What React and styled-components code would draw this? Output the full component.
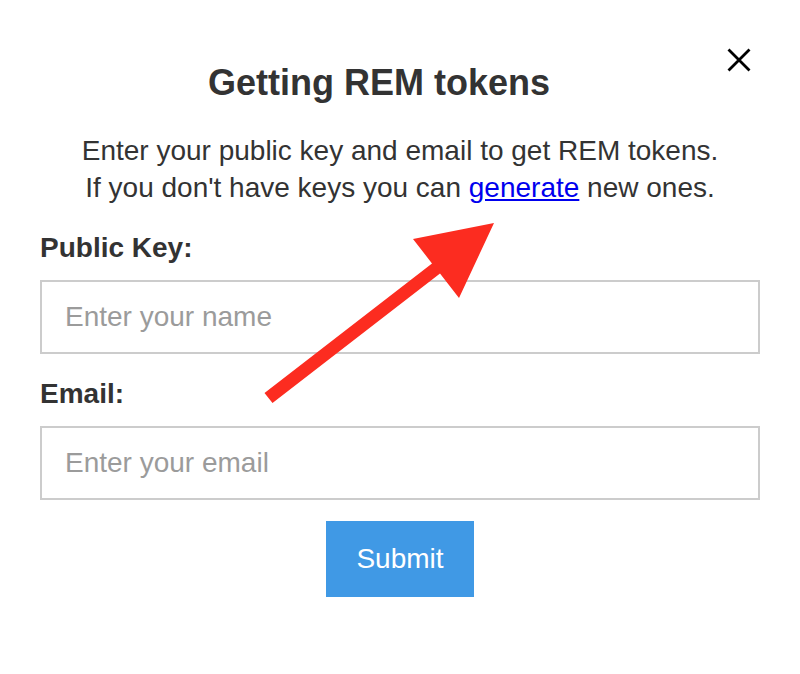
import React from "react";
import styled, { createGlobalStyle } from "styled-components";

const GlobalStyle = createGlobalStyle`
  html, body {
    margin: 0;
    padding: 0;
    background: #ffffff;
  }
  body {
    font-family: "Liberation Sans", Arial, Helvetica, sans-serif;
    color: #333333;
  }
  * { box-sizing: border-box; }
`;

const Page = styled.div`
  position: relative;
  width: 800px;
  min-height: 674px;
  padding: 40px 40px;
  background: #ffffff;
`;

const Header = styled.div`
  display: flex;
  align-items: flex-start;
`;

const Title = styled.h1`
  flex: 1;
  margin: 22px 0 0;
  text-align: center;
  font-size: 36px;
  line-height: 42px;
  font-weight: 700;
  color: #333333;
`;

const CloseButton = styled.button`
  width: 42px;
  height: 40px;
  padding: 0;
  border: none;
  background: transparent;
  display: flex;
  align-items: center;
  justify-content: center;
  cursor: pointer;
`;

const Intro = styled.p`
  margin: 28px 0 0;
  text-align: center;
  font-size: 28px;
  line-height: 37px;
  color: #333333;
`;

const Link = styled.a`
  color: #0000ee;
  text-decoration: underline;
`;

const Form = styled.form`
  margin-top: 26px;
  display: flex;
  flex-direction: column;
`;

const Label = styled.label`
  display: block;
  margin-top: ${(p) => (p.$first ? "0" : "24px")};
  font-size: 28px;
  line-height: 32px;
  font-weight: 700;
  color: #333333;
`;

const Input = styled.input`
  display: block;
  width: 100%;
  height: 74px;
  margin-top: 16px;
  padding: 0 23px;
  border: 2px solid #cccccc;
  border-radius: 0;
  outline: none;
  font-family: "Liberation Sans", Arial, Helvetica, sans-serif;
  font-size: 28px;
  color: #333333;
  background: #ffffff;
  &::placeholder {
    color: #9b9b9b;
  }
`;

const ButtonRow = styled.div`
  display: flex;
  justify-content: center;
  margin-top: 21px;
`;

const SubmitButton = styled.button`
  height: 76px;
  padding: 0 30px;
  border: none;
  border-radius: 0;
  background: #4099e5;
  color: #ffffff;
  font-family: "Liberation Sans", Arial, Helvetica, sans-serif;
  font-size: 28px;
  cursor: pointer;
`;

const ArrowOverlay = styled.svg`
  position: absolute;
  top: 0;
  left: 0;
  pointer-events: none;
`;

export default function App() {
  return (
    <>
      <GlobalStyle />
      <Page>
        <Header>
          <Title>Getting REM tokens</Title>
          <CloseButton type="button" aria-label="Close">
            <svg width="24" height="24" viewBox="0 0 24 24">
              <path
                d="M1.5 1.5 L22.5 22.5 M22.5 1.5 L1.5 22.5"
                stroke="#000"
                strokeWidth="2.8"
                fill="none"
              />
            </svg>
          </CloseButton>
        </Header>
        <Intro>
          Enter your public key and email to get REM tokens.
          <br />
          If you don't have keys you can <Link href="#">generate</Link> new ones.
        </Intro>
        <Form onSubmit={(e) => e.preventDefault()}>
          <Label $first htmlFor="pk">Public Key:</Label>
          <Input id="pk" type="text" placeholder="Enter your name" />
          <Label htmlFor="email">Email:</Label>
          <Input id="email" type="email" placeholder="Enter your email" />
          <ButtonRow>
            <SubmitButton type="submit">Submit</SubmitButton>
          </ButtonRow>
        </Form>
        <ArrowOverlay width="800" height="674" viewBox="0 0 800 674">
          <polygon
            points="264.5,393 432,263.4 413,239 494,223 459,298 440,273.5 272.5,403"
            fill="#fc2c20"
          />
        </ArrowOverlay>
      </Page>
    </>
  );
}
